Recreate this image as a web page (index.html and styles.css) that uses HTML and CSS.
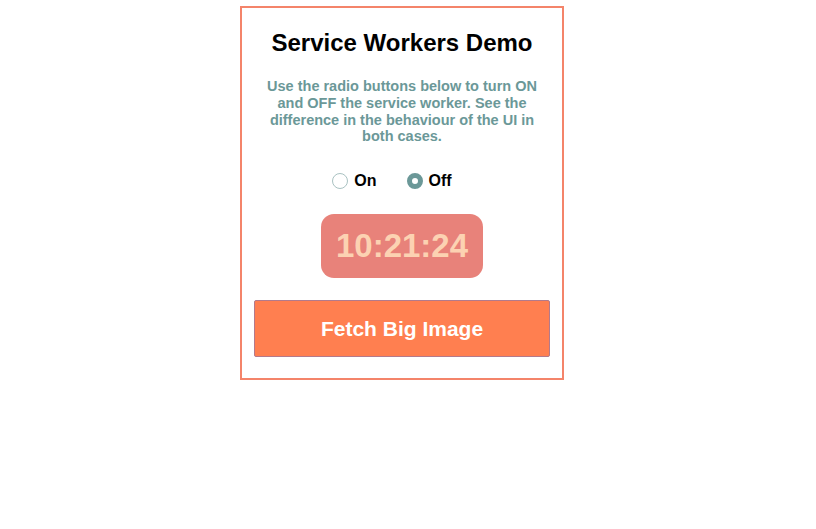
FILE: index.html
```html
<!DOCTYPE html>
<html>
<head>
<meta charset="utf-8">
<link rel="stylesheet" href="styles.css">
</head>
<body>
<div class="card">
  <h1 class="title">Service Workers Demo</h1>
  <p class="desc">Use the radio buttons below to turn ON and OFF the service worker. See the difference in the behaviour of the UI in both cases.</p>
  <div class="radios">
    <label class="opt"><span class="radio"></span>On</label>
    <label class="opt"><span class="radio checked"></span>Off</label>
  </div>
  <div class="clock">10:21:24</div>
  <button class="fetch">Fetch Big Image</button>
</div>
</body>
</html>
```
FILE: styles.css
```css
html, body { margin: 0; padding: 0; background: #fff; }
body { font-family: "Liberation Sans", Arial, sans-serif; }
.card {
  box-sizing: border-box;
  width: 324px;
  margin: 6px 0 0 240px;
  border: 2px solid #f4846a;
  padding: 21px 12px 21px;
  display: flex;
  flex-direction: column;
  align-items: center;
}
.title {
  margin: 0;
  font-size: 24px;
  line-height: 28px;
  font-weight: bold;
  color: #000;
}
.desc {
  margin: 21px 6px 0;
  font-size: 14.5px;
  line-height: 16.8px;
  font-weight: bold;
  color: #6b9898;
  text-align: center;
}
.radios {
  margin-top: 27px;
  padding-right: 20px;
  display: flex;
  gap: 30px;
}
.opt {
  display: flex;
  align-items: center;
  gap: 6px;
  font-size: 16px;
  line-height: 18px;
  font-weight: bold;
  color: #000;
}
.radio {
  box-sizing: border-box;
  width: 16px;
  height: 16px;
  border-radius: 50%;
  border: 1px solid #a9c2c2;
  background: #fff;
}
.radio.checked {
  border: 5px solid #6b9898;
}
.clock {
  margin-top: 24px;
  width: 162px;
  height: 64px;
  box-sizing: border-box;
  background: #e8827a;
  border-radius: 13px;
  color: #fcd2b2;
  font-size: 33px;
  font-weight: bold;
  display: flex;
  align-items: center;
  justify-content: center;
}
.fetch {
  margin-top: 22px;
  width: 100%;
  height: 57px;
  background: #ff7f50;
  border: 1px solid #b27a8c;
  border-radius: 2px;
  color: #fff;
  font-family: "Liberation Sans", Arial, sans-serif;
  font-size: 21px;
  font-weight: bold;
}
```
